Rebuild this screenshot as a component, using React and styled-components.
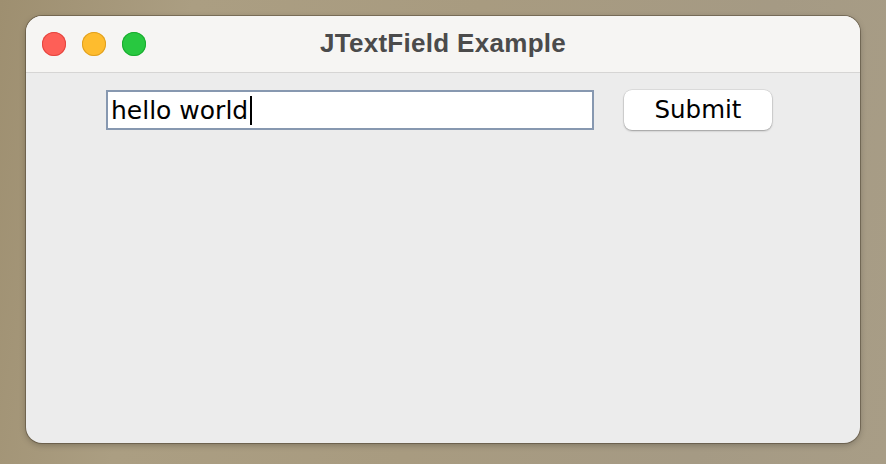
import React from "react";
import styled, { createGlobalStyle } from "styled-components";

const GlobalStyle = createGlobalStyle`
  html, body {
    margin: 0;
    padding: 0;
    width: 886px;
    height: 464px;
    overflow: hidden;
  }
  body {
    background: linear-gradient(100deg, #9e8f70 0%, #ab9e82 20%, #a89b80 50%, #a59a84 80%, #a89d86 100%);
    font-family: "DejaVu Sans", "Liberation Sans", sans-serif;
  }
`;

const Desktop = styled.div`
  width: 886px;
  height: 464px;
  padding: 16px 0 0 26px;
  box-sizing: border-box;
`;

const Window = styled.div`
  width: 834px;
  height: 427px;
  border-radius: 16px;
  overflow: hidden;
  display: flex;
  flex-direction: column;
  background: #ececec;
  box-shadow: 0 0 0 1px rgba(70, 60, 45, 0.45), 0 2px 6px rgba(0, 0, 0, 0.25);
`;

const TitleBar = styled.div`
  height: 57px;
  flex-shrink: 0;
  display: flex;
  align-items: center;
  position: relative;
  background: #f6f5f3;
  border-bottom: 1px solid #d6d5d4;
  box-sizing: border-box;
`;

const Lights = styled.div`
  display: flex;
  gap: 16px;
  padding-left: 16px;
`;

const Light = styled.span`
  width: 24px;
  height: 24px;
  border-radius: 50%;
  background: ${(p) => p.$color};
  box-shadow: inset 0 0 0 1px ${(p) => p.$edge};
`;

const Title = styled.div`
  position: absolute;
  left: 0;
  right: 0;
  top: 0;
  bottom: 0;
  display: flex;
  align-items: center;
  justify-content: center;
  font-family: "Liberation Sans", Arial, sans-serif;
  font-weight: bold;
  font-size: 26px;
  letter-spacing: 0.3px;
  color: #4b4b4b;
  padding-bottom: 1px;
  pointer-events: none;
`;

const Content = styled.div`
  flex: 1;
  padding: 17px 0 0 80px;
`;

const Row = styled.div`
  display: flex;
  align-items: flex-start;
  gap: 30px;
`;

const Field = styled.div`
  width: 488px;
  height: 40px;
  box-sizing: border-box;
  background: #ffffff;
  border: 2px solid #8798b0;
  display: flex;
  align-items: center;
  padding-left: 3px;
  font-size: 25px;
  color: #000;
`;

const Caret = styled.span`
  display: inline-block;
  width: 2px;
  height: 29px;
  background: #000;
  margin-left: 2px;
`;

const Button = styled.button`
  width: 148px;
  height: 40px;
  border: none;
  border-radius: 8px;
  background: #ffffff;
  box-shadow: 0 0 0 0.5px rgba(0, 0, 0, 0.12), 0 1px 2px rgba(0, 0, 0, 0.3);
  font-family: "DejaVu Sans", "Liberation Sans", sans-serif;
  font-size: 24.5px;
  color: #000;
  padding: 0 0 1px;
`;

export default function App() {
  return (
    <>
      <GlobalStyle />
      <Desktop>
        <Window>
          <TitleBar>
            <Lights>
              <Light $color="#fe5f57" $edge="#e4463f" />
              <Light $color="#febc2e" $edge="#e0a020" />
              <Light $color="#28c840" $edge="#1aab2f" />
            </Lights>
            <Title>JTextField Example</Title>
          </TitleBar>
          <Content>
            <Row>
              <Field>
                hello world
                <Caret />
              </Field>
              <Button>Submit</Button>
            </Row>
          </Content>
        </Window>
      </Desktop>
    </>
  );
}
